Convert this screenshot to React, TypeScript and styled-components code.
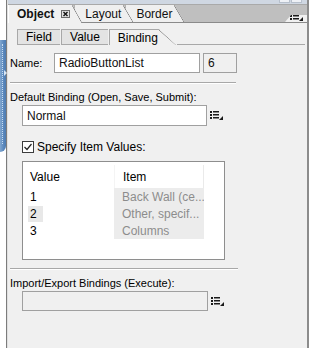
import { FC } from 'react'
import styled, { createGlobalStyle } from 'styled-components'

const GlobalStyle = createGlobalStyle`
	* { box-sizing: border-box; }
	body {
		margin: 0;
		background: #ffffff;
		font-family: Tahoma, "Liberation Sans", "DejaVu Sans", sans-serif;
		font-size: 11px;
		color: #000;
	}
`

const MenuIcon: FC = () => (
	<svg width="14" height="9" viewBox="0 0 14 9">
		<g fill="#1a1a1a">
			<rect x="0" y="0" width="2" height="2" />
			<rect x="3" y="0" width="6" height="1.5" />
			<rect x="0" y="3" width="2" height="2" />
			<rect x="3" y="3" width="6" height="1.5" />
			<rect x="0" y="6" width="2" height="2" />
			<rect x="3" y="6" width="6" height="1.5" />
			<polygon points="13,5 13,9 9,9" />
		</g>
	</svg>
)

const CloseBox: FC = () => (
	<svg width="9" height="8" viewBox="0 0 9 8">
		<rect x="0.5" y="0.5" width="8" height="7" fill="#e0e0e0" stroke="#6a6a6a" />
		<path d="M2.5 2 L6.5 6 M6.5 2 L2.5 6" stroke="#111" strokeWidth="1.4" />
	</svg>
)

const CheckMark: FC = () => (
	<svg width="10" height="10" viewBox="0 0 10 10">
		<path d="M1.5 5 L4 7.5 L8.5 2" fill="none" stroke="#222" strokeWidth="1.2" />
	</svg>
)

const tabs = [
	{ label: 'Object', active: true },
	{ label: 'Layout', active: false },
	{ label: 'Border', active: false },
]

const rows = [
	{ value: '1', item: 'Back Wall (ce...', selected: false },
	{ value: '2', item: 'Other, specif...', selected: true },
	{ value: '3', item: 'Columns', selected: false },
]

const App: FC = () => {
	return (
		<>
			<GlobalStyle />
			<Screen>
				<Dock>
					<DockBar>
						<DockArrow />
					</DockBar>
				</Dock>
				<Panel>
					<TopStrip>
						<StripButton />
						<StripButton />
					</TopStrip>
					<TabRow>
						{tabs.map((t, i) => (
							<MainTab key={t.label} active={t.active} level={tabs.length - i}>
								<TabLabel bold={t.active}>{t.label}</TabLabel>
								{t.active && <CloseBox />}
							</MainTab>
						))}
						<TabFill />
						<TabMenu>
							<MenuIcon />
						</TabMenu>
					</TabRow>
					<SubTabRow>
						<SubTab>Field</SubTab>
						<SubTab>Value</SubTab>
						<SubTab active>Binding</SubTab>
						<SubTabLine />
					</SubTabRow>

					<NameRow>
						<Label>Name:</Label>
						<TextBox width={146}>RadioButtonList</TextBox>
						<TextBox width={34} disabled>6</TextBox>
					</NameRow>
					<Separator />

					<SectionLabel>Default Binding (Open, Save, Submit):</SectionLabel>
					<FieldRow>
						<TextBox width={185} tall>Normal</TextBox>
						<MenuIcon />
					</FieldRow>

					<CheckRow>
						<CheckBox>
							<CheckMark />
						</CheckBox>
						<span>Specify Item Values:</span>
					</CheckRow>

					<ListBox>
						<ListHeader>
							<ValueCell>Value</ValueCell>
							<ItemHeader>Item</ItemHeader>
						</ListHeader>
						{rows.map(r => (
							<ListRow key={r.value}>
								<ValueCell>
									<ValueText selected={r.selected}>{r.value}</ValueText>
								</ValueCell>
								<ItemCell>{r.item}</ItemCell>
							</ListRow>
						))}
					</ListBox>
					<Separator wide />

					<SectionLabel>Import/Export Bindings (Execute):</SectionLabel>
					<FieldRow>
						<TextBox width={186} disabled />
						<MenuIcon />
					</FieldRow>
				</Panel>
			</Screen>
		</>
	)
}

const Screen = styled.div`
	width: 309px;
	height: 348px;
	display: flex;
	overflow: hidden;
`

const Dock = styled.div`
	width: 6px;
	flex-shrink: 0;
	padding-top: 40px;
`

const DockBar = styled.div`
	position: relative;
	width: 6px;
	height: 112px;
	border-radius: 0 0 6px 0;
	background: linear-gradient(90deg, #7fa6d0 0%, #5a88bd 60%, #4d7bb0 100%);

	&::before {
		content: '';
		position: absolute;
		left: 2px;
		top: 4px;
		bottom: 8px;
		border-left: 1px dotted #c8dcf0;
	}
`

const DockArrow = styled.div`
	position: absolute;
	right: -1px;
	top: 30px;
	width: 0;
	height: 0;
	border-top: 3px solid transparent;
	border-bottom: 3px solid transparent;
	border-left: 3px solid #d8e6f4;
`

const Panel = styled.div`
	width: 303px;
	height: 348px;
	background: #f0f0f0;
	border-left: 1px solid #7c7c7c;
	box-shadow: inset 1px 0 0 #e0e0e0;
	border-right: 2px solid #8c8c8c;
	display: flex;
	flex-direction: column;
	padding-left: 1px;
`

const TopStrip = styled.div`
	height: 4px;
	background: #cfd7e2;
	display: flex;
	justify-content: flex-end;
	gap: 1px;
	padding-right: 5px;
`

const StripButton = styled.div`
	width: 11px;
	height: 3px;
	background: #eef1f6;
	border: 1px solid #b7c0cc;
	border-top: none;
`

const TabRow = styled.div`
	height: 19px;
	display: flex;
	align-items: stretch;
	background: #bfbfbf;
	border-top: 1px solid #a9a9a9;
	border-bottom: 1px solid #8a8a8a;
`

const MainTab = styled.div<{ active?: boolean; level: number }>`
	position: relative;
	display: flex;
	align-items: center;
	gap: 7px;
	padding: 0 12px 0 ${p => (p.active ? 8 : 10)}px;
	margin-right: -8px;
	background: ${p => (p.active ? '#f0f0f0' : '#efefef')};
	z-index: ${p => (p.active ? 9 : p.level)};
	margin-bottom: ${p => (p.active ? '-1px' : '0')};
	border-left: 1px solid ${p => (p.active ? '#fff' : '#9a9a9a')};
	clip-path: polygon(0 0, calc(100% - 10px) 0, 100% 100%, 0 100%);

	&::after {
		content: '';
		position: absolute;
		top: 0;
		right: 0;
		width: 10px;
		height: 100%;
		background: linear-gradient(to top right, transparent calc(50% - 0.7px), #6e6e6e 50%, transparent calc(50% + 0.7px));
	}
`

const TabLabel = styled.span<{ bold?: boolean }>`
	font-size: 12px;
	font-weight: ${p => (p.bold ? 700 : 400)};
	color: #111;
`

const TabFill = styled.div`
	flex: 1;
`

const TabMenu = styled.div`
	position: relative;
	width: 22px;
	display: flex;
	align-items: flex-end;
	justify-content: flex-end;
	padding: 0 3px 1px 0;
	background: #f0f0f0;
	clip-path: polygon(0 100%, 6px 10px, 100% 10px, 100% 100%);
`

const SubTabRow = styled.div`
	display: flex;
	align-items: flex-end;
	margin-top: 6px;
	padding-left: 9px;
	height: 16px;
`

const SubTab = styled.div<{ active?: boolean }>`
	position: relative;
	height: 16px;
	display: flex;
	align-items: center;
	font-size: 12px;
	padding: 0 ${p => (p.active ? '18px' : '8px')} 0 8px;
	margin-right: 1px;
	background: ${p => (p.active ? '#f0f0f0' : '#e3e3e3')};
	border-left: 1px solid #a8a8a8;
	border-top: 1px solid #a8a8a8;
	border-bottom: ${p => (p.active ? 'none' : '1px solid #a8a8a8')};
	clip-path: ${p => (p.active ? 'polygon(0 0, calc(100% - 17px) 0, 100% 100%, 0 100%)' : 'none')};

	&::after {
		content: '';
		position: absolute;
		top: 0;
		right: 0;
		width: ${p => (p.active ? '17px' : '0')};
		height: 100%;
		background: linear-gradient(to top right, transparent calc(50% - 0.7px), #8a8a8a 50%, transparent calc(50% + 0.7px));
	}
`

const SubTabLine = styled.div`
	flex: 1;
	margin-right: 2px;
	border-bottom: 1px solid #a8a8a8;
`

const NameRow = styled.div`
	display: flex;
	align-items: center;
	margin-top: 8px;
	padding-left: 2px;
	gap: 3px;
`

const Label = styled.span`
	width: 41px;
`

const TextBox = styled.div<{ width: number; disabled?: boolean; tall?: boolean }>`
	width: ${p => p.width}px;
	height: ${p => (p.tall ? 21 : 20)}px;
	display: flex;
	align-items: center;
	padding-left: 4px;
	background: ${p => (p.disabled ? '#f0f0f0' : '#ffffff')};
	border: 1px solid #a0a0a0;
	font-size: 12px;
	color: #111;
`

const Separator = styled.div<{ wide?: boolean }>`
	width: ${p => (p.wide ? 228 : 226)}px;
	margin: ${p => (p.wide ? '8px' : '9px')} 0 0 2px;
	border-top: 1px solid #a8a8a8;
	border-bottom: 1px solid #ffffff;
`

const SectionLabel = styled.div`
	margin-top: 6px;
	padding-left: 2px;
	height: 14px;
	line-height: 14px;
`

const FieldRow = styled.div`
	display: flex;
	align-items: center;
	gap: 3px;
	margin-top: 1px;
	padding-left: 14px;
`

const CheckRow = styled.div`
	display: flex;
	align-items: center;
	gap: 3px;
	margin-top: 14px;
	padding-left: 14px;
	font-size: 12px;
`

const CheckBox = styled.div`
	width: 12px;
	height: 12px;
	display: flex;
	align-items: center;
	justify-content: center;
	background: #fff;
	border: 1px solid #3c3c3c;
`

const ListBox = styled.div`
	width: 203px;
	height: 99px;
	margin: 7px 0 0 14px;
	padding: 3px 20px 0 4px;
	background: #fff;
	border: 1px solid #8e8e8e;
	display: flex;
	flex-direction: column;
`

const ListHeader = styled.div`
	display: grid;
	grid-template-columns: 87px 90px;
	height: 23px;
	align-items: center;
	font-size: 12px;
`

const ListRow = styled.div`
	display: grid;
	grid-template-columns: 87px 90px;
	height: 17px;
	align-items: center;
	font-size: 12px;
`

const ValueCell = styled.div`
	padding-left: 3px;
	height: 100%;
	display: flex;
	align-items: center;
`

const ValueText = styled.span<{ selected?: boolean }>`
	padding: 1px 6px 1px 2px;
	margin-left: -2px;
	background: ${p => (p.selected ? '#e8e8e8' : 'transparent')};
`

const ItemHeader = styled.div`
	height: 100%;
	display: flex;
	align-items: center;
	padding-left: 8px;
	border-left: 1px solid #f4f4f4;
	border-right: 1px solid #eaeaea;
`

const ItemCell = styled.div`
	height: 100%;
	display: flex;
	align-items: center;
	padding-left: 8px;
	background: #ececec;
	color: #8c8c8c;
	white-space: nowrap;
	overflow: hidden;
`

export default App
